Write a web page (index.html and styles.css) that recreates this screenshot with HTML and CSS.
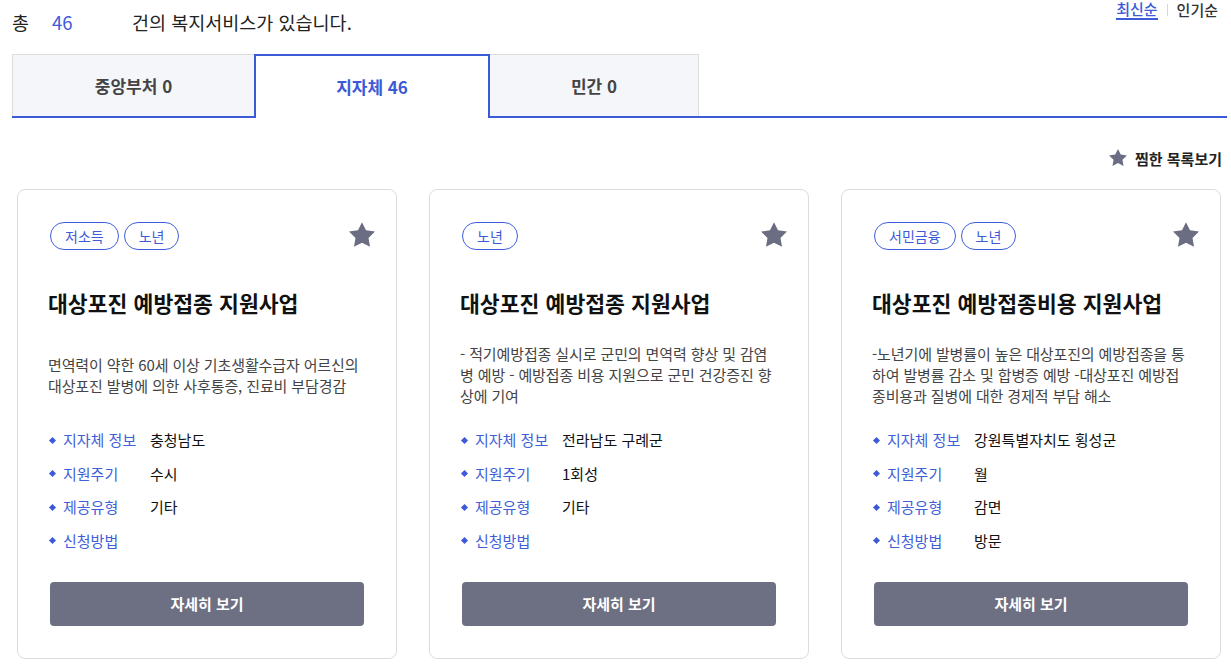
FILE: index.html
```html
<!DOCTYPE html>
<html lang="ko">
<head>
<meta charset="utf-8">
<title>복지서비스</title>
<link rel="stylesheet" href="styles.css">
</head>
<body>
<div class="page">
  <div class="top">
    <p class="total"><span class="total-label">총</span><span class="total-num">46</span><span class="total-rest">건의 복지서비스가 있습니다.</span></p>
    <div class="sort">
      <a class="sort-link active" href="#">최신순</a>
      <span class="sort-sep"></span>
      <a class="sort-link" href="#">인기순</a>
    </div>
  </div>

  <div class="tabs">
    <div class="tab tab-first">중앙부처 0</div>
    <div class="tab tab-active">지자체 46</div>
    <div class="tab tab-last">민간 0</div>
  </div>

  <div class="fav-row">
    <a class="fav-link" href="#">
      <svg class="fav-star" viewBox="2 2 20 19.02"><polygon points="12,2 15.09,8.26 22,9.27 17,14.14 18.18,21.02 12,17.77 5.82,21.02 7,14.14 2,9.27 8.91,8.26"/></svg>
      찜한 목록보기
    </a>
  </div>

  <div class="cards">
    <div class="card">
      <svg class="card-star" viewBox="2 2 20 19.02"><polygon points="12,2 15.09,8.26 22,9.27 17,14.14 18.18,21.02 12,17.77 5.82,21.02 7,14.14 2,9.27 8.91,8.26"/></svg>
      <div class="tags"><span class="tag">저소득</span><span class="tag">노년</span></div>
      <h3 class="card-title">대상포진 예방접종 지원사업</h3>
      <div class="desc"><p>면역력이 약한 60세 이상 기초생활수급자 어르신의 대상포진 발병에 의한 사후통증, 진료비 부담경감</p></div>
      <ul class="info">
        <li><span class="info-label">지자체 정보</span><span class="info-value">충청남도</span></li>
        <li><span class="info-label">지원주기</span><span class="info-value">수시</span></li>
        <li><span class="info-label">제공유형</span><span class="info-value">기타</span></li>
        <li><span class="info-label">신청방법</span><span class="info-value"></span></li>
      </ul>
      <a class="btn" href="#">자세히 보기</a>
    </div>

    <div class="card">
      <svg class="card-star" viewBox="2 2 20 19.02"><polygon points="12,2 15.09,8.26 22,9.27 17,14.14 18.18,21.02 12,17.77 5.82,21.02 7,14.14 2,9.27 8.91,8.26"/></svg>
      <div class="tags"><span class="tag">노년</span></div>
      <h3 class="card-title">대상포진 예방접종 지원사업</h3>
      <div class="desc"><p>- 적기예방접종 실시로 군민의 면역력 향상 및 감염병 예방 - 예방접종 비용 지원으로 군민 건강증진 향상에 기여</p></div>
      <ul class="info">
        <li><span class="info-label">지자체 정보</span><span class="info-value">전라남도 구례군</span></li>
        <li><span class="info-label">지원주기</span><span class="info-value">1회성</span></li>
        <li><span class="info-label">제공유형</span><span class="info-value">기타</span></li>
        <li><span class="info-label">신청방법</span><span class="info-value"></span></li>
      </ul>
      <a class="btn" href="#">자세히 보기</a>
    </div>

    <div class="card">
      <svg class="card-star" viewBox="2 2 20 19.02"><polygon points="12,2 15.09,8.26 22,9.27 17,14.14 18.18,21.02 12,17.77 5.82,21.02 7,14.14 2,9.27 8.91,8.26"/></svg>
      <div class="tags"><span class="tag">서민금융</span><span class="tag">노년</span></div>
      <h3 class="card-title">대상포진 예방접종비용 지원사업</h3>
      <div class="desc"><p>-노년기에 발병률이 높은 대상포진의 예방접종을 통하여 발병률 감소 및 합병증 예방 -대상포진 예방접종비용과 질병에 대한 경제적 부담 해소</p></div>
      <ul class="info">
        <li><span class="info-label">지자체 정보</span><span class="info-value">강원특별자치도 횡성군</span></li>
        <li><span class="info-label">지원주기</span><span class="info-value">월</span></li>
        <li><span class="info-label">제공유형</span><span class="info-value">감면</span></li>
        <li><span class="info-label">신청방법</span><span class="info-value">방문</span></li>
      </ul>
      <a class="btn" href="#">자세히 보기</a>
    </div>
  </div>
</div>
</body>
</html>
```

FILE: styles.css
```css
* { box-sizing: border-box; }

html, body {
  margin: 0;
  padding: 0;
  background: #fff;
}

body {
  font-family: "Noto Sans CJK KR", "Noto Sans", sans-serif;
  color: #222;
}

a { text-decoration: none; color: inherit; }

.page {
  margin-left: 12px;
  width: 1215px;
}

.top {
  display: flex;
  justify-content: space-between;
  align-items: flex-start;
  height: 54px;
}

.total {
  margin: 10px 0 0;
  font-size: 18.5px;
  line-height: 24px;
  color: #222;
  display: flex;
}

.total-num {
  color: #3d5bd9;
  margin-left: 23px;
  width: 80px;
}

.sort {
  display: flex;
  align-items: center;
  margin-right: 9px;
}

.sort-link {
  font-size: 15px;
  line-height: 20px;
  font-weight: 500;
  color: #333;
}

.sort-link.active {
  color: #3d5bd9;
  border-bottom: 2px solid #3d5bd9;
  line-height: 18px;
}

.sort-sep {
  width: 1px;
  height: 12px;
  background: #d6d6d6;
  margin: 0 9px;
}

.tabs {
  display: flex;
  border-bottom: 2px solid #3b5bd6;
  height: 64px;
}

.tab {
  display: flex;
  align-items: center;
  justify-content: center;
  font-size: 17px;
  font-weight: 700;
  color: #444;
  background: #f5f6fa;
  border-top: 1px solid #ddd;
  height: 62px;
}

.tab-first {
  width: 242px;
  border-left: 1px solid #ddd;
}

.tab-active {
  width: 236px;
  height: 64px;
  background: #fff;
  color: #3b5bd6;
  border: 2px solid #3b5bd6;
  border-bottom: none;
  padding-bottom: 2px;
}

.tab-last {
  width: 209px;
  border-right: 1px solid #ddd;
}

.fav-row {
  display: flex;
  justify-content: flex-end;
  padding: 10px 5px 0 0;
  height: 71px;
}

.fav-link {
  display: flex;
  align-items: center;
  gap: 8px;
  font-size: 15px;
  font-weight: 700;
  color: #222;
  line-height: 22px;
}

.fav-star {
  width: 18px;
  height: 17px;
  fill: #6b6e82;
  margin-top: -2px;
}

.cards {
  display: grid;
  grid-template-columns: repeat(3, 380px);
  gap: 32px;
  padding-left: 5px;
}

.card {
  position: relative;
  border: 1px solid #dcdcdc;
  border-radius: 8px;
  padding: 32px;
  height: 470px;
  display: flex;
  flex-direction: column;
}

.card-star {
  position: absolute;
  top: 32px;
  right: 21px;
  width: 26px;
  height: 25px;
  fill: #6b6e82;
}

.tags {
  display: flex;
  gap: 5px;
}

.tag {
  height: 28px;
  padding: 0 14px;
  border: 1px solid #3d5fdc;
  border-radius: 14px;
  font-size: 14px;
  line-height: 26px;
  color: #3d5bd9;
}

.card-title {
  margin: 39px 0 0 -2px;
  font-size: 21.6px;
  line-height: 28px;
  font-weight: 700;
  color: #111;
  white-space: nowrap;
}

.desc {
  margin: 26px -4px 0 -2px;
  height: 63px;
  display: flex;
  align-items: center;
}

.desc p {
  margin: 0;
  font-size: 15px;
  line-height: 21px;
  color: #444;
  letter-spacing: -0.12px;
  word-break: break-all;
}

.info {
  list-style: none;
  margin: 23px 0 0;
  padding: 0;
  display: flex;
  flex-direction: column;
  gap: 11.5px;
}

.info li {
  display: flex;
  align-items: center;
  font-size: 15px;
  line-height: 22px;
}

.info li::before {
  content: "";
  width: 5px;
  height: 5px;
  background: #3d5bd9;
  transform: rotate(45deg);
  margin: 0 8px 0 0;
}

.info-label {
  width: 87px;
  color: #3f5fd8;
}

.info-value {
  color: #111;
}

.btn {
  margin-top: 30px;
  height: 44px;
  border-radius: 4px;
  background: #6d7083;
  color: #fff;
  font-size: 15px;
  font-weight: 700;
  display: flex;
  align-items: center;
  justify-content: center;
}
```
